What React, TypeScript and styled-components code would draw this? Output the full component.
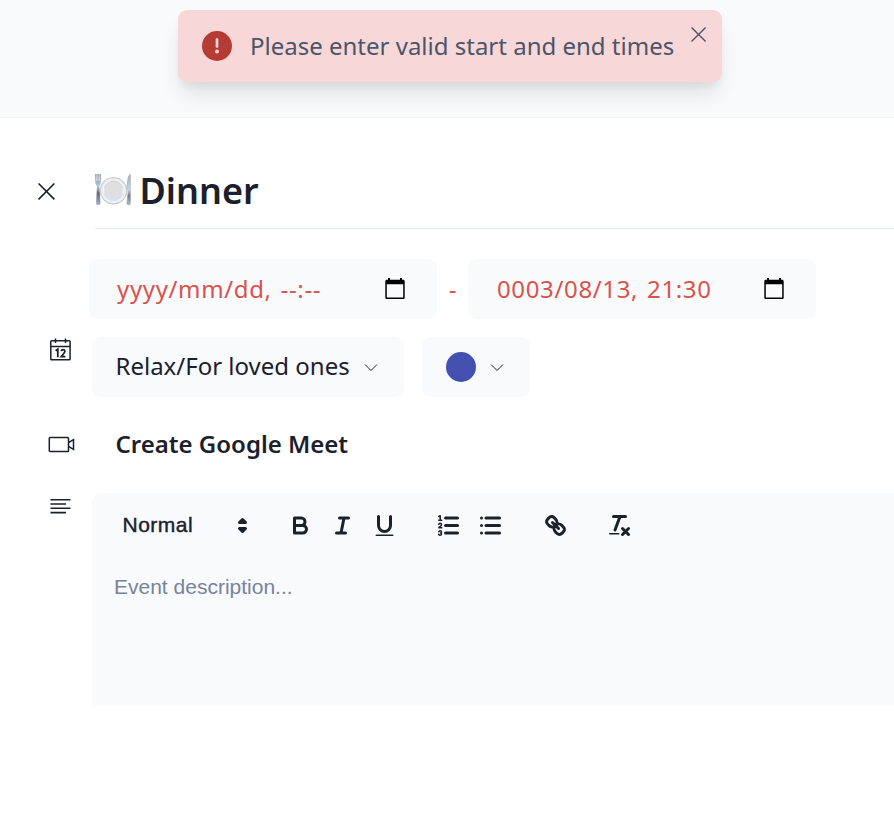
import React from "react";
import styled, { createGlobalStyle } from "styled-components";

const Global = createGlobalStyle`
  *, *::before, *::after { box-sizing: border-box; }
  body { margin: 0; background: #fff; color: #1a202c; font-family: "Noto Sans", sans-serif; overflow: hidden; }
  button { font: inherit; color: inherit; border: 0; background: none; padding: 0; }
  svg { display: block; flex: none; }
`;

const Page = styled.main`
  width: 100%;
  height: 834px;
  overflow: hidden;
`;

const Backdrop = styled.header`
  height: 118px;
  padding: 10px 0 0 178px;
  background: #f8fafc;
  border-bottom: 1px solid #f3f4f6;
  overflow: hidden;
`;

const Toast = styled.div`
  display: flex;
  align-items: flex-start;
  width: 544px;
  height: 72px;
  padding-left: 24px;
  border-radius: 9px;
  background: #f8d7d9;
  color: #4a5568;
  box-shadow: 0 15px 22px -4px rgba(0, 0, 0, 0.11), 0 6px 9px -3px rgba(0, 0, 0, 0.06);
`;

const AlertIcon = styled.svg`
  margin-top: 21px;
`;

const ToastText = styled.div`
  width: 424px;
  margin-left: 18px;
  font-size: 24px;
  line-height: 72px;
  white-space: nowrap;
`;

const ToastClose = styled.button`
  margin: 17px 0 0 17px;
`;

const TitleRow = styled.div`
  display: flex;
  height: 111px;
`;

const CloseButton = styled.button`
  width: 95px;
  padding: 65px 0 0 38px;
  align-self: flex-start;
`;

const Title = styled.h1`
  display: flex;
  align-items: flex-start;
  flex: 1;
  margin: 0;
  border-bottom: 1px solid #e2e8f0;
  font-size: 36px;
  font-weight: 600;
  line-height: 50px;
`;

const Plate = styled.svg`
  margin-top: 55px;
`;

const TitleText = styled.span`
  margin: 48px 0 0 7.500px;
`;

const Times = styled.div`
  display: flex;
  align-items: center;
  margin: 30px 0 0 89px;
  color: #d9534c;
  font-size: 24px;
  line-height: 60px;
`;

const TimeField = styled.div<{ $inset: number }>`
  display: flex;
  align-items: center;
  justify-content: space-between;
  width: 348px;
  height: 60px;
  padding: 0 30px 0 ${(p) => p.$inset}px;
  border-radius: 9px;
  background: #f8fafc;
`;

const Value = styled.span`
  letter-spacing: 0.640px;
  word-spacing: 2px;
  white-space: nowrap;
`;

const Dash = styled.span`
  width: 31px;
  text-align: center;
`;

const FormRow = styled.div<{ $top: number; $height: number }>`
  display: flex;
  align-items: flex-start;
  height: ${(p) => p.$height}px;
  margin-top: ${(p) => p.$top}px;
`;

const Gutter = styled.div<{ $top: number; $left: number }>`
  flex: none;
  width: 92px;
  padding: ${(p) => p.$top}px 0 0 ${(p) => p.$left}px;
`;

const Select = styled.button<{ $width: number }>`
  display: flex;
  align-items: center;
  justify-content: space-between;
  width: ${(p) => p.$width}px;
  height: 60px;
  margin-right: 18px;
  padding: 0 26px 0 23.500px;
  border-radius: 9px;
  background: #f8fafc;
  font-size: 24px;
  white-space: nowrap;
`;

const SelectLabel = styled.span`
  padding-bottom: 3px;
`;

const Swatch = styled.span`
  width: 30px;
  height: 30px;
  border-radius: 50%;
  background: #4350af;
`;

const MeetButton = styled.button`
  margin-left: 23.500px;
  font-size: 24px;
  font-weight: 600;
  line-height: 36px;
  white-space: nowrap;
`;

const Editor = styled.section`
  flex: 1;
  height: 212px;
  border-radius: 9px 0 0 0;
  background: #f8fafc;
  font-family: "Liberation Sans", Arial, sans-serif;
`;

const Toolbar = styled.div`
  display: flex;
  align-items: center;
  height: 65px;
  padding-left: 30px;
`;

const FormatPicker = styled.button`
  display: flex;
  align-items: center;
  justify-content: space-between;
  width: 134px;
  font-size: 21px;
  font-weight: 500;
  letter-spacing: 0.500px;
  -webkit-text-stroke: 0.400px #1a202c;
`;

const FormatLabel = styled.span`
  padding: 0 0 2px 0.500px;
`;

const ToolGroup = styled.div<{ $before: number }>`
  display: flex;
  gap: 15px;
  margin-left: ${(p) => p.$before}px;
`;

const ToolSvg = styled.svg`
  width: 27px;
  height: 27px;
  fill: none;
  stroke: #1a202c;
  stroke-width: 2;
  stroke-linecap: round;
  stroke-linejoin: round;

  .fill { fill: #1a202c; }
  .solid { fill: #1a202c; stroke: none; }
  .thin { stroke-width: 1; }
`;

const Placeholder = styled.div`
  padding: 17px 0 0 22px;
  color: #77839a;
  font-size: 21px;
  line-height: 24px;
`;

const Tool = ({ children }: { children: React.ReactNode }) => (
  <ToolSvg viewBox="0 0 18 18">{children}</ToolSvg>
);

const Cross = ({ size, color }: { size: number; color: string }) => (
  <svg width={size} height={size} viewBox="0 0 17 17" fill="none" stroke={color} strokeWidth="1.5">
    <path d="M.5 .5 15.500 15.500M15.500 .5 .5 15.500" />
  </svg>
);

const Chevron = () => (
  <svg width="14" height="9" viewBox="0 0 14 9" fill="none" stroke="#1a202c" strokeWidth="1">
    <path d="M1 1.500 7 7.500 13 1.500" />
  </svg>
);

const DateIcon = () => (
  <svg width="24" height="24" viewBox="0 0 24 24">
    <path
      fill="#000"
      d="M20 2.700h-1V1h-2v1.700H7V1H5v1.700H4c-1.100 0-1.700.7-1.700 1.700v16c0 .9.7 1.600 1.700 1.600h16c1 0 1.700-.7 1.700-1.600V4.400c0-1-.7-1.700-1.700-1.700zm.2 17.800H3.800V7.300H20.200V20.500z"
    />
  </svg>
);

const PlateIcon = () => (
  <Plate width="37" height="34" viewBox="0 0 37 34">
    <defs>
      <linearGradient id="steel" x1="0" y1="0" x2="0" y2="1">
        <stop offset="0" stopColor="#77808b" />
        <stop offset=".38" stopColor="#b5cbe3" />
        <stop offset=".62" stopColor="#676b72" />
        <stop offset="1" stopColor="#a0b4cc" />
      </linearGradient>
      <linearGradient id="blade" x1="0" y1="0" x2="0" y2="1">
        <stop offset="0" stopColor="#a3aab2" />
        <stop offset=".5" stopColor="#c0d6ec" />
        <stop offset=".7" stopColor="#7a7e85" />
        <stop offset="1" stopColor="#adbdd0" />
      </linearGradient>
      <radialGradient id="rim">
        <stop offset=".6" stopColor="#ececed" />
        <stop offset=".88" stopColor="#f1f2f3" />
        <stop offset="1" stopColor="#c9cacc" />
      </radialGradient>
    </defs>
    <path fill="url(#steel)" d="M.3 1H1.500V8H2.400V1H3.700V8H4.600V1H5.800V8.500C5.800 11 5.300 12 4.300 13L5.500 30.500Q5.200 32 3.300 32T1.100 30.500L2 13C.8 12 .3 11 .3 8.500Z" />
    <circle cx="18.500" cy="17.800" r="13.400" fill="url(#rim)" stroke="#bfc1c4" strokeWidth=".7" />
    <circle cx="18.500" cy="17.800" r="9" fill="#dfdfe0" />
    <path d="M9.500 20A9.200 9.200 0 0 0 27.500 20" fill="none" stroke="#d0e1f5" strokeWidth="1.500" />
    <path d="M9.500 15.500A9.200 9.200 0 0 1 27.500 15.500" fill="none" stroke="#c5c7ca" strokeWidth=".8" />
    <path fill="url(#blade)" stroke="#a0a6ae" strokeWidth=".4" d="M35.500 1C33 2.500 31.800 8 32 16L33 17.500 31.800 30.500Q32 32 33.700 32T35.600 30.500Z" />
  </Plate>
);

export default function App() {
  return (
    <Page>
      <Global />
      <Backdrop>
        <Toast role="alert">
          <AlertIcon width="30" height="30" viewBox="0 0 30 30">
            <circle cx="15" cy="15" r="15" fill="#b53b35" />
            <path d="M15 8.500v7" stroke="#f8d7d9" strokeWidth="2.700" strokeLinecap="round" />
            <circle cx="15" cy="20.500" r="2" fill="#f8d7d9" />
          </AlertIcon>
          <ToastText>Please enter valid start and end times</ToastText>
          <ToastClose aria-label="Dismiss"><Cross size={16} color="#4a5568" /></ToastClose>
        </Toast>
      </Backdrop>

      <TitleRow>
        <CloseButton aria-label="Close"><Cross size={18} color="#1a202c" /></CloseButton>
        <Title>
          <PlateIcon />
          <TitleText>Dinner</TitleText>
        </Title>
      </TitleRow>

      <Times>
        <TimeField $inset={28}>
          <Value>yyyy/mm/dd, --:--</Value>
          <DateIcon />
        </TimeField>
        <Dash>-</Dash>
        <TimeField $inset={29}>
          <Value>0003/08/13, 21:30</Value>
          <DateIcon />
        </TimeField>
      </Times>

      <FormRow $top={18} $height={60}>
        <Gutter $top={1} $left={50}>
          <svg width="21" height="24" viewBox="0 0 21 24" fill="none" stroke="#1a202c" strokeWidth="1.500">
            <rect x=".8" y="2.800" width="19.300" height="19" rx=".8" />
            <path d="M1 8.500H20M5.500 .5V5M15.500 .5V5" />
            <path d="M5.600 12.800 7.800 11.300V19.300M11.200 13.200Q11.500 11.600 13.100 11.600T14.900 13.300C14.900 14.800 12.700 16.500 11.300 18.600H15.400" strokeWidth="1.800" />
          </svg>
        </Gutter>
        <Select $width={312}><SelectLabel>Relax/For loved ones</SelectLabel><Chevron /></Select>
        <Select $width={108}><Swatch /><Chevron /></Select>
      </FormRow>

      <FormRow $top={29} $height={36}>
        <Gutter $top={10} $left={48}>
          <svg width="27" height="17" viewBox="0 0 27 17" fill="none" stroke="#1a202c" strokeWidth="1.500">
            <rect x="1.300" y="1.500" width="19.200" height="14" rx=".8" />
            <path d="M20.500 6.700 25.500 3.500V13.500L20.500 10.400" />
          </svg>
        </Gutter>
        <MeetButton>Create Google Meet</MeetButton>
      </FormRow>

      <FormRow $top={31} $height={212}>
        <Gutter $top={5} $left={50}>
          <svg width="21" height="17" viewBox="0 0 21 17" fill="none" stroke="#1a202c" strokeWidth="1.600">
            <path d="M.5 1.700H20.500M.5 6H16M.5 10.300H20.500M.5 14.600H16" />
          </svg>
        </Gutter>
        <Editor>
          <Toolbar>
            <FormatPicker>
              <FormatLabel>Normal</FormatLabel>
              <Tool>
                <polygon className="fill" points="7 11 9 13 11 11 7 11" />
                <polygon className="fill" points="7 7 9 5 11 7 7 7" />
              </Tool>
            </FormatPicker>
            <ToolGroup $before={31}>
              <Tool>
                <path d="M5,4H9.5A2.5,2.5,0,0,1,12,6.5v0A2.5,2.5,0,0,1,9.5,9H5Z" />
                <path d="M5,9h5.500A2.5,2.5,0,0,1,13,11.5v0A2.5,2.5,0,0,1,10.5,14H5Z" />
              </Tool>
              <Tool><path d="M7 4H13M5 14H11M8 14 10 4" /></Tool>
              <Tool>
                <path d="M5,3V9a4.012,4.012,0,0,0,4,4H9a4.012,4.012,0,0,0,4-4V3" />
                <rect className="solid" height="1" rx=".5" width="12" x="3" y="15" />
              </Tool>
            </ToolGroup>
            <ToolGroup $before={37}>
              <Tool>
                <path d="M7 4H15M7 9H15M7 14H15" />
                <path className="thin" d="M2.500 5.500H4.500M2.500 3 3.500 2.500V5.500" />
                <path className="thin" d="M4.5,10.5h-2c0-.234,1.85-1.076,1.85-2.234A0.959,0.959,0,0,0,2.5,8.156" />
                <path className="thin" d="M2.5,14.846a0.959,0.959,0,0,0,1.85-.109A0.7,0.7,0,0,0,3.75,14a0.688,0.688,0,0,0,.6-0.736,0.959,0.959,0,0,0-1.85-.109" />
              </Tool>
              <Tool><path d="M6 4H15M6 9H15M6 14H15M3 4H3M3 9H3M3 14H3" /></Tool>
            </ToolGroup>
            <ToolGroup $before={38}>
              <Tool>
                <path d="M7 7 11 11" />
                <path d="M8.9,4.577a3.476,3.476,0,0,1,.36,4.679A3.476,3.476,0,0,1,4.577,8.9C3.185,7.5,2.035,6.4,4.217,4.217S7.5,3.185,8.9,4.577Z" />
                <path d="M13.423,9.1a3.476,3.476,0,0,0-4.679-.36,3.476,3.476,0,0,0,.36,4.679c1.392,1.392,2.5,2.542,4.679.36S14.815,10.5,13.423,9.1Z" />
              </Tool>
            </ToolGroup>
            <ToolGroup $before={37}>
              <Tool>
                <path d="M5 3H13M6 12 9.350 3M11 11 15 15M15 11 11 15" />
                <rect className="solid" height="1" rx=".5" width="7" x="2" y="14" />
              </Tool>
            </ToolGroup>
          </Toolbar>
          <Placeholder>Event description...</Placeholder>
        </Editor>
      </FormRow>
    </Page>
  );
}
